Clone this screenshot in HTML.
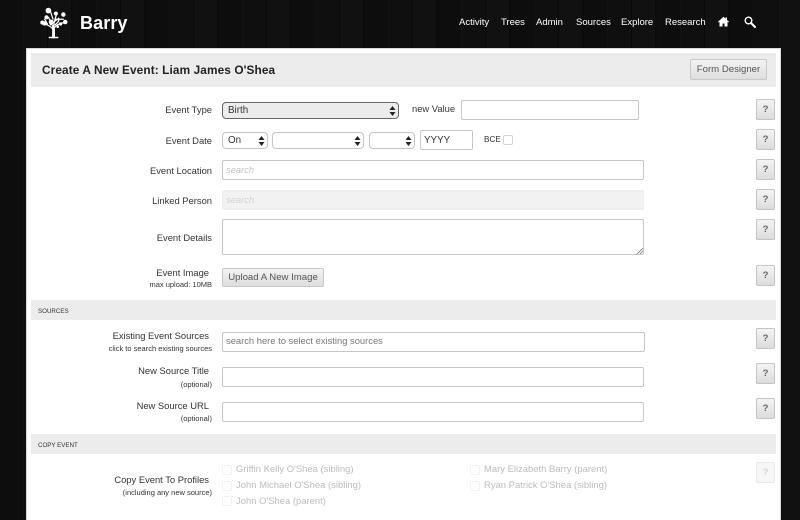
<!DOCTYPE html>
<html><head><meta charset="utf-8">
<style>
html,body{margin:0;padding:0}
body{width:800px;height:520px;overflow:hidden;position:relative;background:#0c0c0c;font-family:"Liberation Sans",sans-serif;color:#333}
.wood{position:absolute;left:0;top:0;width:800px;height:520px;background:repeating-linear-gradient(90deg,#0d0d0d 0 23px,#121212 23px 24px,#0f0f0f 24px 47px,#090909 47px 48px,#111 48px 71px,#0b0b0b 71px 73px)}
.a{position:absolute;white-space:nowrap}
.nav{top:15.500px;font-size:9.500px;color:#fff;line-height:13px}
.panel{position:absolute;left:26px;top:48px;width:755px;height:472px;background:#fff;border:1px solid #d8d8d8;border-bottom:0;box-sizing:border-box}
.band{position:absolute;left:31px;width:745px;background:#ececec}
.lab{right:588px;font-size:9.400px;color:#333;line-height:13px;text-align:right}
.sub{right:588px;font-size:7.500px;color:#333;line-height:10px}
.inp{position:absolute;box-sizing:border-box;background:#fff;border:1px solid #c6c6c6;border-radius:2px;font-size:9.400px;line-height:17px;padding-left:3px}
.sel{position:absolute;box-sizing:border-box;background:#fff;border:1px solid #c4c4c4;border-radius:4px;height:17px;font-size:9.800px;line-height:15px;padding-left:5px}
.sel svg{position:absolute;right:2px;top:2.500px}
.q{position:absolute;left:756px;width:19px;height:21px;box-sizing:border-box;border:1px solid #c4c4c4;border-radius:2px;background:linear-gradient(#f4f4f4,#dcdcdc);font-size:9.500px;font-weight:bold;color:#666;text-align:center;line-height:19px}
.btn{position:absolute;box-sizing:border-box;border:1px solid #c8c8c8;border-radius:2px;background:linear-gradient(#f3f3f3,#dedede);color:#555;font-size:9.600px;text-align:center}
.cb{position:absolute;width:8px;height:8px;border:1px solid #f2f2f2;border-radius:2px;background:#fff}
.ct{font-size:9.450px;color:#bcbcbc;line-height:13px}
</style></head><body>
<div class="wood"></div>

<svg class="a" style="left:39px;top:6px" width="30" height="33" viewBox="0 0 32 33" fill="none">
<g stroke="#fff" stroke-width="1.300" stroke-linecap="round">
<path d="M15.500 32V23" stroke-width="3"/>
<path d="M11 32.500h9" stroke-width="1.500"/>
<path d="M15.500 24C12 20 9 19 4 17.500M15.500 23C13 17 12 13 9 10M15.500 24C15 19 17 13 19 7M15.500 23C18 19 23 17 28 16.500M17 19C20 17 22 14 21 12M17.500 13L26 13M6 13l3 5M12 4l3 9M21 12L12 19"/>
</g>
<g fill="#fff">
<circle cx="10" cy="3.800" r="3"/><circle cx="3.500" cy="16.500" r="2.200"/><circle cx="8" cy="11" r="2.200"/><circle cx="6" cy="17.500" r="2.300"/>
<circle cx="13" cy="16" r="2.600"/><circle cx="18" cy="7" r="2.200"/><circle cx="26" cy="8" r="2.400"/><circle cx="28" cy="16" r="2.400"/><circle cx="23" cy="18" r="1.800"/><circle cx="20" cy="21" r="1.400"/>
</g></svg>
<div class="a" style="left:80px;top:12px;font-size:18px;font-weight:bold;color:#fff;line-height:22px;letter-spacing:.1px">Barry</div>

<div class="a nav" style="left:459px">Activity</div>
<div class="a nav" style="left:501px">Trees</div>
<div class="a nav" style="left:536px">Admin</div>
<div class="a nav" style="left:576px">Sources</div>
<div class="a nav" style="left:621px">Explore</div>
<div class="a nav" style="left:665px">Research</div>
<svg class="a" style="left:718px;top:16px" width="11" height="11" viewBox="0 0 11 11"><path fill="#fff" d="M5.500.8L0 5.800l.6.700L1.500 5.800V10.500h3V7.500h2V10.500h3V5.800l.9.700.600-.700L9 4V1.500H7.500V2.600Z"/></svg>
<svg class="a" style="left:744px;top:16px" width="12" height="12" viewBox="0 0 12 12" fill="none"><circle cx="4.500" cy="4.500" r="3.300" stroke="#fff" stroke-width="1.400"/><path d="M7 7l4 4" stroke="#fff" stroke-width="2" stroke-linecap="round"/></svg>

<div class="panel"></div>
<div class="band" style="top:53px;height:34px"></div>
<div class="a" style="left:42px;top:62px;font-size:11.800px;font-weight:bold;color:#222;line-height:16px;letter-spacing:.12px">Create A New Event: Liam James O'Shea</div>
<div class="btn" style="left:690px;top:59px;width:77px;height:21px;line-height:20px">Form Designer</div>

<div class="a lab" style="top:103px">Event Type</div>
<div class="sel" style="left:222px;top:102px;width:177px;height:17px;background:#ececec;border:1px solid #666">Birth<svg width="7" height="10" viewBox="0 0 7 10"><path fill="#222" d="M3.500 0L6.500 4H.5ZM3.500 10L.5 6h6Z"/></svg></div>
<div class="a" style="left:412px;top:102px;font-size:9.400px;line-height:13px">new Value</div>
<div class="inp" style="left:461px;top:100px;width:178px;height:20px"></div>
<div class="q" style="top:99px">?</div>

<div class="a lab" style="top:133.500px">Event Date</div>
<div class="sel" style="left:222px;top:132px;width:46px">On<svg width="7" height="10" viewBox="0 0 7 10"><path fill="#222" d="M3.500 0L6.500 4H.5ZM3.500 10L.5 6h6Z"/></svg></div>
<div class="sel" style="left:272px;top:132px;width:92px"><svg width="7" height="10" viewBox="0 0 7 10"><path fill="#222" d="M3.500 0L6.500 4H.5ZM3.500 10L.5 6h6Z"/></svg></div>
<div class="sel" style="left:369px;top:132px;width:46px"><svg width="7" height="10" viewBox="0 0 7 10"><path fill="#222" d="M3.500 0L6.500 4H.5ZM3.500 10L.5 6h6Z"/></svg></div>
<div class="inp" style="left:420px;top:130px;width:53px;height:20px;color:#333;font-size:9.800px;line-height:19px">YYYY</div>
<div class="a" style="left:484px;top:133px;font-size:8.200px;line-height:13px">BCE</div>
<div class="cb" style="left:503px;top:135px;border-color:#d4d4d4"></div>
<div class="q" style="top:129px">?</div>

<div class="a lab" style="top:163.500px">Event Location</div>
<div class="inp" style="left:222px;top:160px;width:422px;height:20px;color:#c4c4c4;font-style:italic">search</div>
<div class="q" style="top:159px">?</div>

<div class="a lab" style="top:193.500px">Linked Person</div>
<div class="inp" style="left:222px;top:190px;width:422px;height:20px;background:#f2f2f2;border-color:#eee;color:#d2d2d2;font-style:italic">search</div>
<div class="q" style="top:189px">?</div>

<div class="a lab" style="top:231px">Event Details</div>
<div class="inp" style="left:222px;top:219px;width:422px;height:36px"></div>
<svg class="a" style="left:636px;top:247px" width="7" height="7" viewBox="0 0 7 7"><path stroke="#777" stroke-width=".8" d="M1 7L7 1M4 7L7 4"/></svg>
<div class="q" style="top:219px">?</div>

<div class="a lab" style="top:265.500px;right:591px">Event Image</div>
<div class="a sub" style="top:280px">max upload: 10MB</div>
<div class="btn" style="left:222px;top:268px;width:102px;height:19px;line-height:18px">Upload A New Image</div>
<div class="q" style="top:265px">?</div>

<div class="band" style="top:300px;height:20px"></div>
<div class="a" style="left:38px;top:306.500px;font-size:6.200px;line-height:10px;color:#333">SOURCES</div>

<div class="a lab" style="top:329px;right:591px">Existing Event Sources</div>
<div class="a sub" style="top:344px">click to search existing sources</div>
<div class="inp" style="left:222px;top:332px;width:423px;height:20px;color:#777;line-height:15px;padding-left:3px">search here to select existing sources</div>
<div class="q" style="top:328px">?</div>

<div class="a lab" style="top:364px;right:591px">New Source Title</div>
<div class="a sub" style="top:380px">(optional)</div>
<div class="inp" style="left:222px;top:367px;width:422px;height:20px"></div>
<div class="q" style="top:363px">?</div>

<div class="a lab" style="top:399px;right:591px">New Source URL</div>
<div class="a sub" style="top:414px">(optional)</div>
<div class="inp" style="left:222px;top:402px;width:422px;height:20px"></div>
<div class="q" style="top:398px">?</div>

<div class="band" style="top:434px;height:20px"></div>
<div class="a" style="left:38px;top:440.500px;font-size:6.200px;line-height:10px;color:#333">COPY EVENT</div>

<div class="a lab" style="top:473px;right:591px">Copy Event To Profiles</div>
<div class="a sub" style="top:488px">(including any new source)</div>
<div class="cb" style="left:222px;top:465px"></div><div class="a ct" style="left:236px;top:463px">Griffin Kelly O'Shea (sibling)</div>
<div class="cb" style="left:222px;top:481px"></div><div class="a ct" style="left:236px;top:479px">John Michael O'Shea (sibling)</div>
<div class="cb" style="left:222px;top:496px"></div><div class="a ct" style="left:236px;top:495px">John O'Shea (parent)</div>
<div class="cb" style="left:470px;top:465px"></div><div class="a ct" style="left:484px;top:463px">Mary Elizabeth Barry (parent)</div>
<div class="cb" style="left:470px;top:481px"></div><div class="a ct" style="left:484px;top:479px">Ryan Patrick O'Shea (sibling)</div>
<div class="q" style="top:462px;background:#f7f7f7;border-color:#eaeaea;color:#d4d4d4">?</div>
</body></html>
